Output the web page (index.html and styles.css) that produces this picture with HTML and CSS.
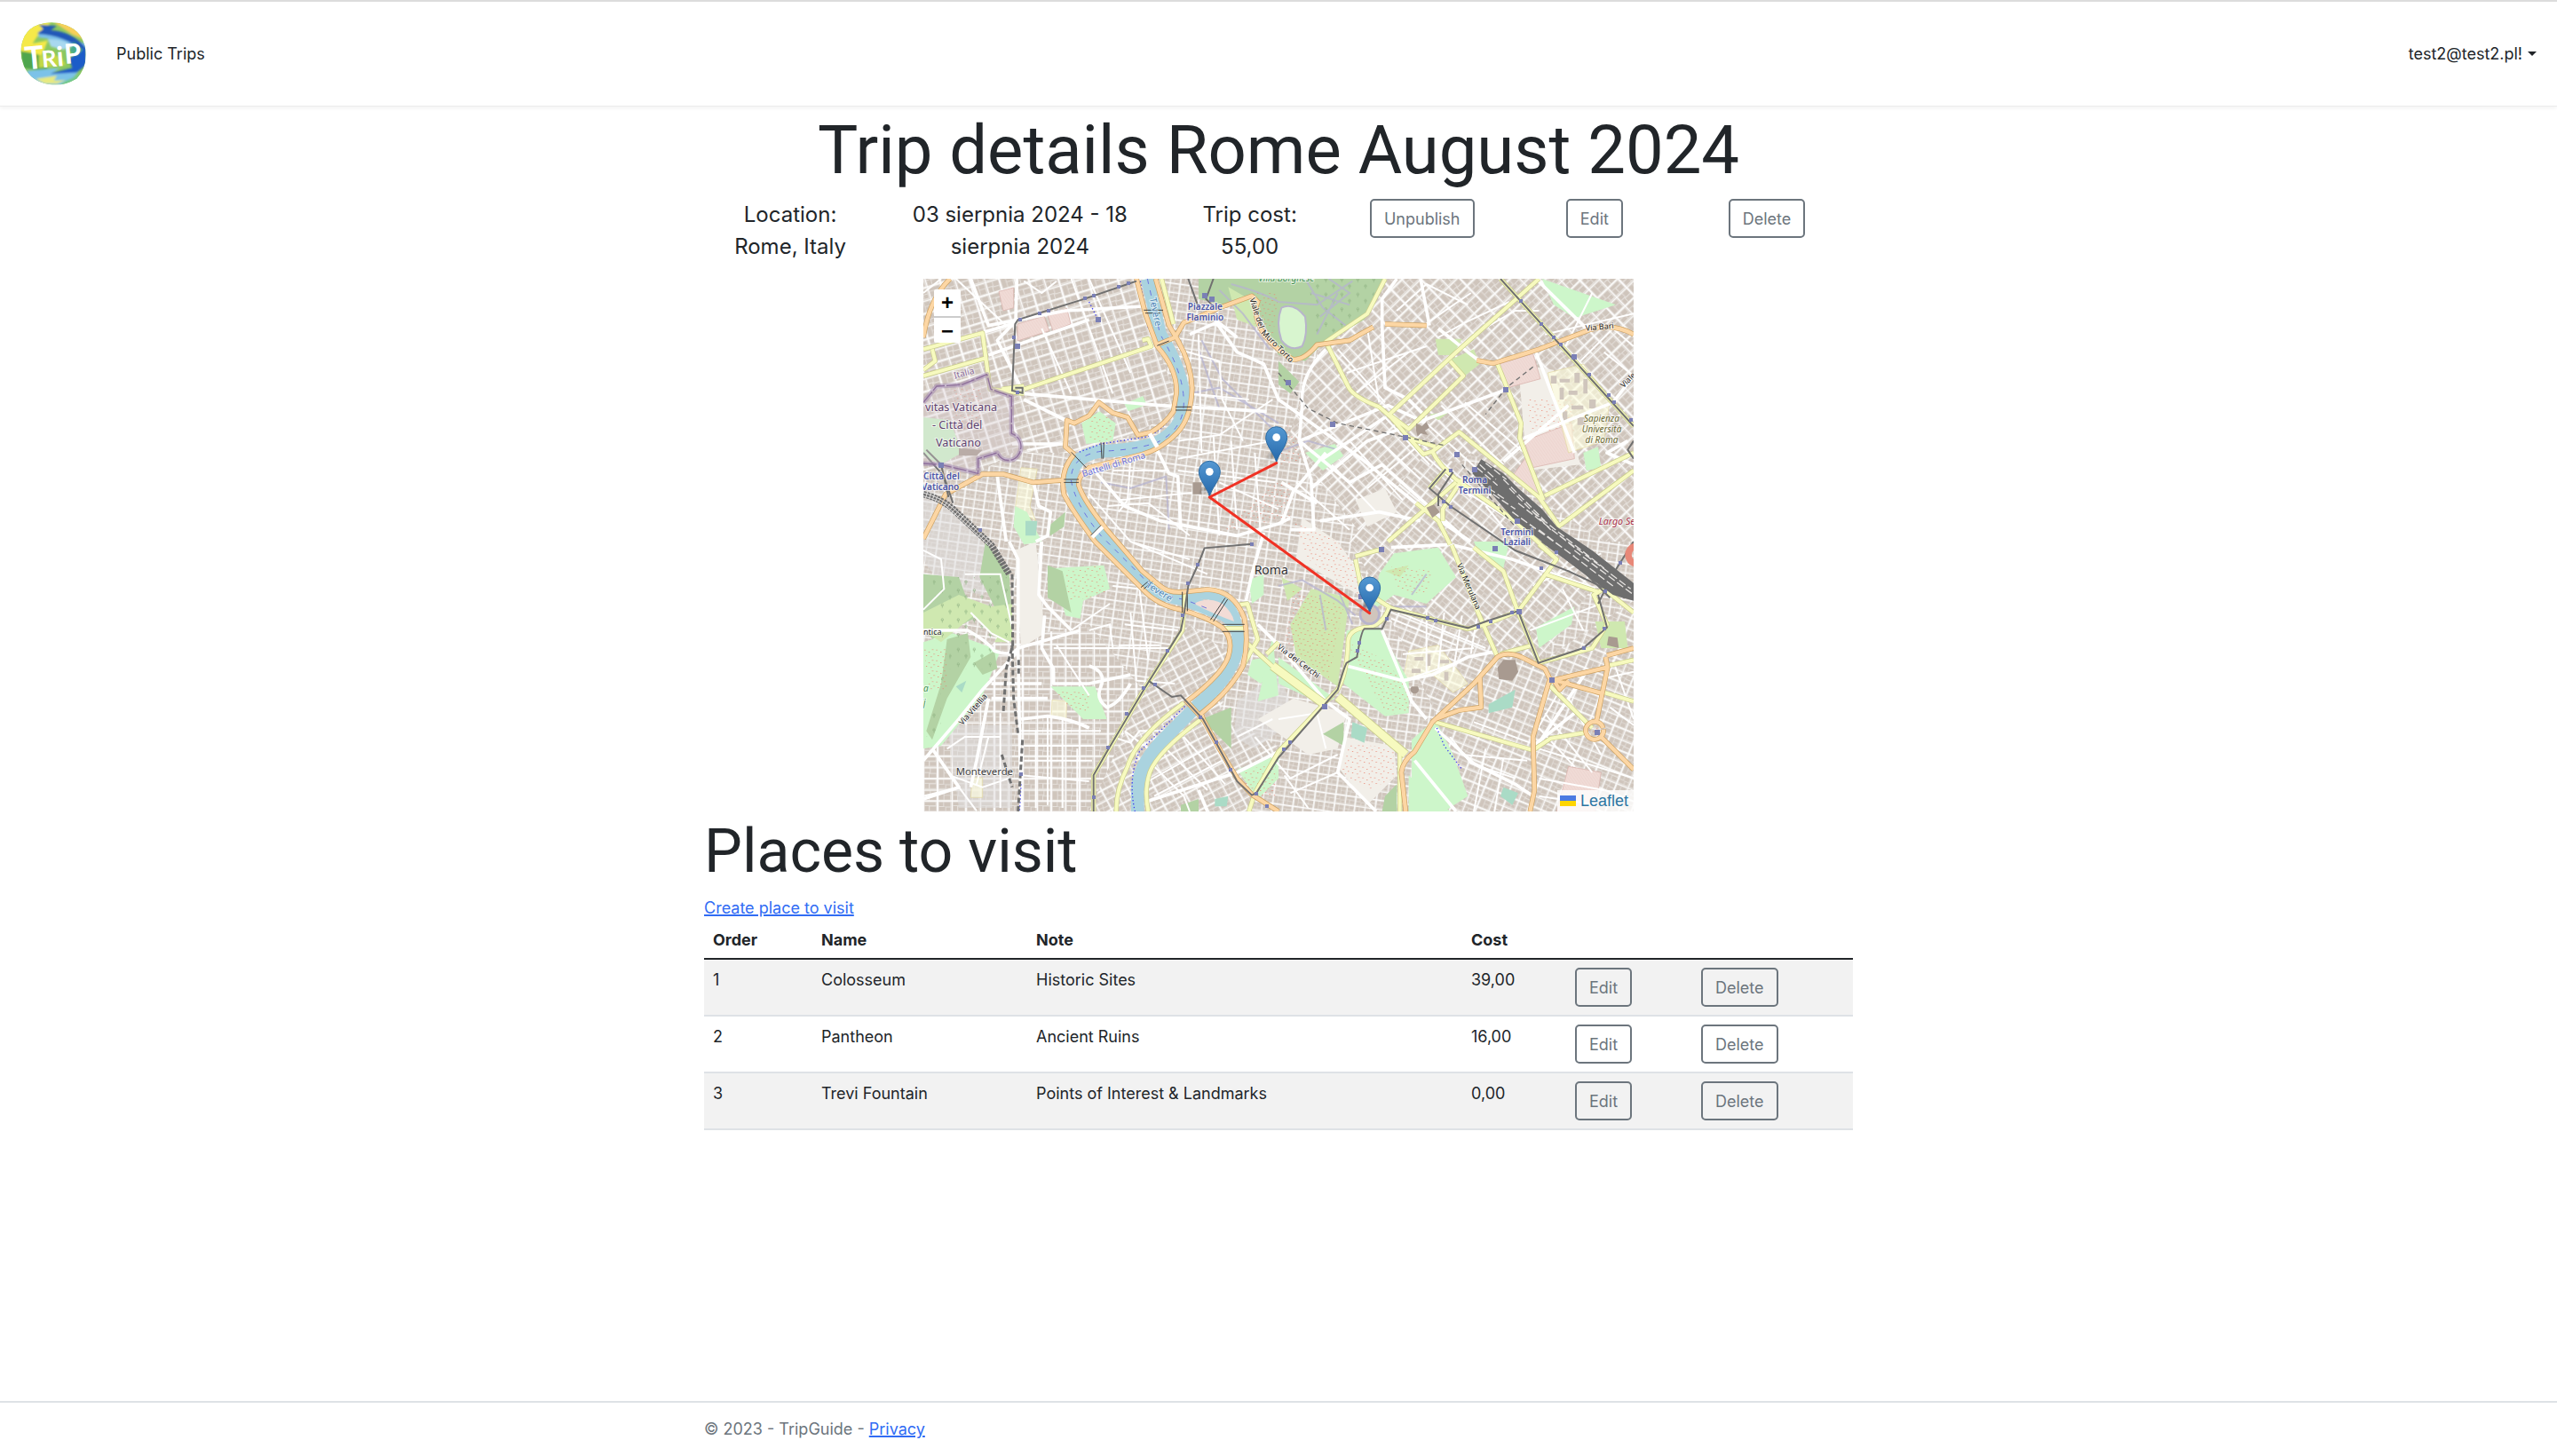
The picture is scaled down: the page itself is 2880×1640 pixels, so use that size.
FILE: index.html
```html
<!DOCTYPE html>
<html lang="en">
<head>
<meta charset="utf-8">
<meta name="viewport" content="width=device-width, initial-scale=1">
<title>Trip details - TripGuide</title>
<link rel="stylesheet" href="styles.css">
</head>
<body>
<header class="navbar">
  <a class="brand" href="#" aria-label="TripGuide home">
    <svg class="logo" viewBox="0 0 216 207" aria-hidden="true">
      <defs>
        <clipPath id="disc"><path d="M60 8 Q105 -8 150 10 Q205 30 214 90 Q220 150 185 185 Q140 212 95 204 Q35 195 12 145 Q-10 95 14 45 Q30 18 60 8Z"/></clipPath>
        <filter id="wash"><feGaussianBlur stdDeviation="3"/></filter>
      </defs>
      <g clip-path="url(#disc)">
        <rect width="216" height="207" fill="#8cc860"/>
        <g filter="url(#wash)">
          <path d="M0 0H100L60 40L40 70L90 60L70 110L0 110Z" fill="#f5e94a"/>
          <path d="M110 0H216V60L170 40Z" fill="#f7cf5a"/>
          <path d="M60 30Q130 50 216 70V120Q160 60 60 50Z" fill="#7cc0ea"/>
          <path d="M60 8L120 12L100 26Q170 30 216 85L205 95Q150 45 55 38L75 22Z" fill="#2458b8"/>
          <path d="M90 55Q150 55 170 80L140 90L100 80Z" fill="#a8d8f0"/>
          <path d="M0 95Q60 100 110 130L80 160L10 150Z" fill="#4fa64e"/>
          <path d="M60 110H130L150 140L60 150Z" fill="#c2d846"/>
          <path d="M216 80L160 120L170 150L110 165L30 172L70 190L170 178L216 140Z" fill="#1f5cc8"/>
          <path d="M20 160L130 150L100 170L190 165L150 207H40Z" fill="#7cc2e8"/>
          <path d="M50 186L120 176L110 192L150 190L120 202H80Z" fill="#e8ea80"/>
          <path d="M145 195L200 170L180 207H130Z" fill="#73c98a"/>
          <path d="M175 65L205 90L185 110L160 95Z" fill="#48aa8a"/>
        </g>
      </g>
      <g fill="#fff" class="logo-text" transform="rotate(-5 108 110)">
        <text x="14" y="148" font-size="104">T</text><text x="69" y="146" font-size="76">R</text><text x="119" y="146" font-size="90">i</text><text x="144" y="140" font-size="90">P</text>
      </g>
    </svg>
  </a>
  <nav class="nav-main" aria-label="Main"><a href="#">Public Trips</a></nav>
  <a class="account" href="#">test2@test2.pl!<span class="caret"></span></a>
</header>

<main class="container">
  <h1>Trip details Rome August 2024</h1>
  <section class="summary">
    <p>Location: Rome, Italy</p>
    <p>03 sierpnia 2024 - 18 sierpnia 2024</p>
    <p>Trip cost: 55,00</p>
    <div><button class="btn" type="button">Unpublish</button></div>
    <div><button class="btn" type="button">Edit</button></div>
    <div><button class="btn" type="button">Delete</button></div>
  </section>

  <section class="map" aria-label="Trip map">
    <svg class="tiles" viewBox="0 12 2400 1800" preserveAspectRatio="xMidYMid slice">
      <defs>
        <pattern id="blocks" width="96" height="84" patternUnits="userSpaceOnUse">
          <rect width="96" height="84" fill="#e4dfda"/>
          <path fill="#cfc5bc" d="M5 5h17v13h-17zM25 5h19v16h-19zM5 22h13v16h-13zM21 25h22v13h-22zM53 5h15v32h-15zM71 5h20v14h-20zM71 22h19v15h-19zM5 47h36v11h-36zM5 61h13v17h-13zM22 63h21v15h-21zM53 47h14v14h-14zM70 47h21v16h-21zM53 65h21v13h-21zM77 66h14v12h-14z"/>
          <path stroke="#fff" stroke-width="5" d="M0 0V84M48 0V84M0 0H96M0 42H96"/>
        </pattern>
        <pattern id="b-prati" href="#blocks" patternTransform="rotate(-17)"/>
        <pattern id="b-old" href="#blocks" patternTransform="rotate(8) scale(.72)"/>
        <pattern id="b-ne" href="#blocks" patternTransform="rotate(-44)"/>
        <pattern id="b-se" href="#blocks" patternTransform="rotate(22) scale(.85)"/>
        <pattern id="b-esq" href="#blocks" patternTransform="rotate(40) scale(.9)"/>
        <pattern id="b-test" href="#blocks" patternTransform="rotate(-28) scale(.85)"/>
        <pattern id="b-mv" href="#blocks" patternTransform="scale(1 .9)"/>
        <pattern id="dots" width="40" height="36" patternUnits="userSpaceOnUse"><path fill="#e8806c" d="M4 5h3v3h-3zM18 12h3v3h-3zM30 4h3v3h-3zM9 24h3v3h-3zM25 28h3v3h-3zM35 19h3v3h-3z"/></pattern>
        <pattern id="trees" width="54" height="50" patternUnits="userSpaceOnUse"><path fill="none" stroke="#8fb183" stroke-width="2" d="M10 24v-8M6 16a4 6 0 1 1 8 0zM36 46v-8M32 38a4 6 0 1 1 8 0z"/></pattern>
        <pattern id="hatch" width="8" height="8" patternUnits="userSpaceOnUse" patternTransform="rotate(-35)"><rect width="8" height="8" fill="#f0dbd6"/><path stroke="#dfb9b3" d="M0 0V8"/></pattern>
        <linearGradient id="pin" x2="0" y2="1"><stop stop-color="#5599d3"/><stop offset="1" stop-color="#2467aa"/></linearGradient>
        <radialGradient id="shade"><stop stop-opacity=".5"/><stop offset="1" stop-opacity="0"/></radialGradient>
        <g id="marker">
          <ellipse cx="24" cy="-28" rx="48" ry="17" fill="url(#shade)" transform="rotate(-42)"/>
          <path d="M0 0C-7 -30 -36 -55 -36 -84A36 36 0 0 1 36 -84C36 -55 7 -30 0 0Z" fill="url(#pin)" stroke="#2e6da4" stroke-width="3"/>
          <circle cy="-84" r="13" fill="#fff"/>
        </g>
        <g id="yellow">
          <path d="M0 250L200 195L225 385L340 400M0 340L210 280M340 385L770 240L760 215L740 220M805 12L845 165M265 385L340 375M0 320L40 290L30 250"/>
          <path d="M1560 12L1500 130L1360 225L1435 375Q1450 410 1540 445L1580 480L1690 605L1720 595L1810 530L2080 750L2150 850M1575 470L1800 260L2080 12M1580 475L1640 520L1825 340L1780 290M1950 12L2400 510M1940 300L2020 500L2015 550L2095 760M2100 745L2400 600M2145 850L2400 660M1640 550L1730 580M1720 595Q1740 640 1800 690L2000 830L2140 960M1800 700L1570 900M1665 770L1740 830L1780 910M1820 690L1755 790V830M1770 650L1710 720"/>
          <path d="M1460 950L1550 925M1460 960L1480 1060L1580 1125L1840 1195L1900 1180L2010 1135M1785 912L1870 1130L1940 1290M1860 920L1960 1000L2010 1140L2080 1310L2260 1260L2310 1180L2265 1080L2300 1060L2400 1140M2010 1135L2140 960L2080 910M2100 1010L2280 1070M1575 1120Q1550 1190 1490 1190Q1430 1200 1435 1250Q1430 1350 1400 1400M1610 1610V1812M1730 1510L2060 1605L2120 1565L2240 1545M2110 1380L2260 1530M2300 1410L2400 1440M1400 1400L1200 1610L1120 1750L1100 1812M1950 1280L2060 1250M2310 1320L2400 1300"/>
          <path d="M885 1070L875 1200L745 1400L575 1690V1812M880 1445Q720 1560 690 1660Q650 1740 652 1812M945 1495Q790 1610 765 1680Q745 1740 760 1812M1010 1193H1090M1060 1115L1095 1110L1130 1230L1080 1320M1090 1240L1200 1340M1160 1280L1200 1240"/>
        </g>
        <g id="orange">
          <path d="M90 12Q20 80 0 210M0 890L75 740L200 672H270L370 700L480 692M785 12L830 170L860 220Q905 300 908 380Q905 480 860 530Q810 585 740 605Q620 635 560 650Q520 680 525 710Q540 760 620 860L740 1000L800 1050Q830 1075 880 1070L960 1062Q1050 1065 1085 1160Q1100 1240 1080 1320Q1040 1400 940 1480L945 1500"/>
          <path d="M720 12L750 130L790 240Q860 320 855 400L845 460Q820 500 770 530L725 540L690 480L640 465L593 430L560 475L510 500L485 490L480 580L510 605M510 605Q460 660 475 740Q500 790 580 900L740 1060Q790 1115 870 1130Q960 1155 1010 1190Q1050 1230 1030 1290Q1010 1350 890 1440L945 1500L1000 1600L1060 1700L1110 1755L1200 1812M790 235L850 210L880 160L920 145L1000 110L1110 70L1130 90Q1110 130 1150 200Q1200 260 1250 285Q1290 285 1330 235L1440 220L1520 175M1560 165L1700 170M1870 288L1925 298L2080 250L2250 185Q2330 160 2400 200"/>
          <path d="M1630 1812L1615 1680Q1620 1640 1660 1610L1720 1510L1860 1380L1940 1290Q1970 1270 2020 1290L2100 1330L2120 1370L2310 1325M2120 1365L2300 1415M2310 1285L2400 1260M2305 1290L2312 1325L2275 1505M2290 1560L2400 1670M2115 1370L2060 1560L2065 1740L2050 1812M1880 1355L1885 1460L1810 1470L1730 1500M2130 1370L2150 1400L2180 1370M2298 1535A30 30 0 1 1 2297 1530"/>
        </g>
      </defs>

      <!-- built-up areas -->
      <rect y="12" width="2400" height="1800" fill="url(#b-old)"/>
      <path fill="url(#b-prati)" d="M0 12H730L790 240L850 400L840 470L700 540L500 600L300 600L200 660H0Z"/>
      <path fill="url(#b-ne)" d="M1340 240L1560 12H2400V900H2300L1850 600L1500 900L1230 560L1280 400Z"/>
      <path fill="url(#b-esq)" d="M1700 600L1850 650L2300 1000L2080 1310L1560 1100L1440 900Z"/>
      <path fill="url(#b-se)" d="M1550 1100L2080 1310L2400 1100V1812H1640L1740 1500Z"/>
      <path fill="url(#b-mv)" d="M0 1500L240 1240L560 1180L740 1400L570 1812H0Z"/>
      <path fill="url(#b-test)" d="M560 1812L745 1400L900 1180L1060 1300L1000 1480L1210 1600L1100 1812Z"/>
      <path fill="#e0dfdf" fill-opacity=".55" d="M0 700L200 900L290 1000L200 1080L60 1050L0 960ZM80 1520H300V1800H120ZM1060 1440L1200 1340L1260 1500L1120 1600L1050 1560Z"/>
      <path fill="#f2efe9" d="M310 930L380 900L410 1210L330 1260ZM1420 1560L1590 1590L1600 1690L1500 1790L1400 1660ZM1280 820L1400 900L1500 1040L1470 1080L1260 960ZM1460 760L1560 720L1600 800L1500 850ZM2010 300L2130 320L2220 640L2040 660ZM1130 1500L1250 1430L1430 1480L1400 1600L1300 1620Z"/>
      <path fill="url(#dots)" d="M1250 830L1400 900L1500 1040L1470 1080L1300 960ZM1440 1580L1590 1600L1590 1700L1500 1740L1410 1680ZM2040 420H2200V600H2060Z"/>

      <!-- institutions -->
      <path fill="url(#hatch)" stroke="#d7aea8" stroke-width="2" d="M318 165L408 138L425 188L318 222ZM420 135L485 112L498 165L438 188ZM255 55L305 42V110L270 120ZM1945 300L2060 265L2085 350L1975 380ZM2030 560L2190 500L2200 620L2060 650ZM1990 680L2040 610L2090 750ZM2180 1660L2290 1680L2270 1812H2140Z"/>
      <path fill="#ffffe0" stroke="#e2d8a0" stroke-width="2" d="M330 650L385 655L360 780L380 830L310 790ZM435 1435L485 1440L482 1500L432 1495ZM165 1698H200V1765H160ZM1640 1270L1740 1250L1840 1380L1790 1410L1720 1350L1620 1370ZM2110 330L2230 300L2320 420L2300 560L2180 600Z" fill-opacity=".6"/>
      <path fill="#cfc5bc" d="M2120 340h20v26h-20zM2150 350h34v12h-34zM2150 380h14v40h-14zM2180 390h30v14h-30zM2200 330h18v34h-18zM2230 350h14v50h-14zM2190 440h40v14h-40zM2160 460h16v34h-16zM2250 420h22v30h-22zM2210 480h26v26h-26zM1660 1290h30v12h-30zM1700 1280h14v40h-14zM1740 1300h36v12h-36zM1760 1340h14v30h-14zM1650 1330h30v14h-30z"/>

      <!-- parks -->
      <g fill="#cdf6ca">
        <path d="M0 480L90 490L130 600L60 640L0 610ZM310 780L350 800L400 900L340 910L305 850ZM535 500L595 460L650 500L640 560L550 570ZM680 435L742 408L755 438L692 460Z"/>
        <path d="M440 990L610 980L630 1060L540 1100L530 1160L480 1150ZM0 1240L100 1210L260 1270L200 1420L60 1590L0 1600ZM430 1390L580 1390L620 1500L540 1500L480 1440ZM1100 1030L1150 1010L1150 1080L1110 1110ZM1110 1300L1160 1290L1180 1340L1140 1380L1095 1350Z"/>
        <path d="M1590 940L1740 920L1800 1020L1700 1110L1590 1080L1520 1130L1540 1010ZM1430 1200L1540 1190L1640 1370L1640 1480L1560 1490L1420 1380ZM1650 1570L1730 1500L1790 1620L1840 1760L1760 1812L1650 1730ZM1640 1690L1780 1812H1640ZM1290 600L1390 570L1420 610L1350 660ZM2070 1190L2200 1120L2190 1180L2080 1260ZM1860 900H1980L1960 990L1880 950ZM2090 12L2340 100L2200 145L2130 100ZM1200 1290L1390 1430L1350 1450L1200 1380ZM1180 1220L1200 1420L1130 1440ZM1060 1670L1200 1620V1700L1130 1770ZM2230 600L2280 580L2290 650L2240 660Z"/>
      </g>
      <g fill="#b3d2a4">
        <path d="M930 12H1560L1490 150L1350 230L1290 290L1200 270L1140 140L1100 70L1010 100L930 80Z"/>
        <path d="M420 850L480 800L475 850L430 880ZM0 1010L120 1020L170 1160L30 1230L0 1180ZM210 900L290 1010L300 1170L240 1120L190 1020ZM420 980L470 1000L500 1140L420 1090ZM80 1230L150 1210L160 1290L80 1430L30 1570L10 1540L60 1380ZM1350 1550L1420 1510L1420 1590ZM940 1500L1040 1460L1040 1600ZM1560 1760L1600 1720V1812H1550ZM870 1790L930 1770V1812H870ZM1200 290L1270 360L1240 400L1200 370ZM170 1310L240 1270L250 1330L200 1350Z"/>
      </g>
      <g fill="#cfe8b0">
        <path d="M120 1080L230 1120L300 1110V1240L240 1220L170 1150L60 1240L0 1200V1140ZM1730 215H1820L1790 270L1740 270ZM1770 290L1860 250L1880 300L1830 340ZM1310 1060L1440 1090L1400 1390L1260 1290L1240 1180ZM1210 1020L1280 1060L1230 1100ZM2270 1170L2370 1170L2380 1260L2290 1260ZM1560 1000L1640 980L1610 1020ZM1780 460L1740 490L1710 470ZM270 1190L290 1240H240ZM1030 40L1100 80L1140 180L1060 150Z"/>
      </g>
      <path fill="#d8f5cf" stroke="#b8b4cc" stroke-width="6" d="M1210 110Q1250 90 1290 140Q1300 200 1280 240Q1240 260 1210 220Q1190 160 1210 110Z"/>
      <path fill="#aadbc6" d="M345 830L385 830L380 880L345 880ZM110 1390L145 1370L130 1410ZM1910 1450L2000 1400L1990 1460L1910 1480ZM1450 1510L1500 1530L1490 1580L1445 1560ZM985 1770L1030 1760L1025 1795H985ZM1960 1730L2010 1750L1990 1790L1950 1760Z"/>
      <path fill="url(#dots)" d="M0 1260H80V1400H20ZM480 1000L600 980L620 1080L490 1100ZM440 1400H560V1480L480 1450ZM1250 1060L1420 1120L1370 1360L1220 1240ZM1580 980L1720 1000L1700 1080L1600 1060ZM1430 1240L1560 1300L1640 1400V1480L1560 1480ZM1100 60L1200 60L1180 220L1120 180ZM1230 500L1300 620L1200 640ZM560 480H640V560H560ZM1080 1680L1190 1640V1760H1100ZM200 380H100V520H190ZM1000 870L1240 820V700H1180ZM2250 1530H2290V1560H2250Z"/>
      <path fill="url(#trees)" d="M1300 12H1550L1480 150L1330 220ZM30 1020H300V1230H60ZM100 1240H230V1330H60V1560H10Z"/>
      <path fill="none" stroke="#b5b3d0" stroke-width="6" stroke-opacity=".75" d="M1000 50L1080 130L1170 250M1040 30Q1150 60 1200 90L1330 100L1450 20M1290 12L1350 110L1440 180M1310 60L1440 100M1370 12L1440 60L1340 140M1330 200L1400 60M940 220L1010 350L1180 520M930 250L1000 450M900 400L1000 380L1200 500M1190 600L1300 560L1400 590M1200 1050L1280 1030L1400 1100L1460 1150M1340 1080L1360 1200M1400 1060L1450 1180M1590 1120L1700 1120M1650 1080L1700 1010M600 700L700 720L820 680L830 860"/>

      <!-- minor streets -->
      <g class="w-thin">
        <path d="M500 12L640 400M110 12L280 170M60 12L0 60M560 12L700 330M400 180L500 400M450 20L400 60L340 20M340 420L490 490M350 590L480 570M860 250L1000 290L1010 420L1080 560M930 200L940 600M900 400L1100 420M860 560L1000 540L1180 420M860 620L1180 560M700 620L690 760L660 800M640 660L820 660M860 660L1190 700M940 620L930 860M1040 560L1060 860M660 760L960 730M560 740L700 900L900 960M620 780L760 770L900 880M700 900L960 1010M1000 700L1200 790M1120 600L1140 880M980 540L1000 880"/>
        <path d="M1400 250L1560 430M1500 180L1540 430M1430 330L1700 240M1460 400L1640 260M1640 560L1850 750M1750 440L1960 640M1700 500L1900 680M1680 570L1500 720M1830 430L2030 600M1860 200L2000 120L2080 120M1600 120L1700 30L1840 100M1690 170L1850 60M1740 210L1830 160L1980 90M2100 200L2400 130M2260 60L2160 260M2300 260L2400 340M2210 300L2330 180L2400 240M1830 730L2180 950M1900 780L2000 900M1260 700L1440 860M1440 560L1620 760M1500 520L1680 690M1560 480L1710 640M1380 640L1530 800"/>
        <path d="M0 1130L70 1060L60 960L0 930M140 1010L260 1010L300 1190M160 1140L230 1210L290 1240M560 1200L630 1180L640 1260L440 1260M450 1250L560 1420M640 1050L730 1060L760 1300M500 1200L630 1110M680 1180L860 1200M700 1140L720 1370L850 1380M660 1250L800 1250M600 1260L830 1260M330 1540H600M340 1590H580M340 1640H570M330 1690L560 1710M380 1540V1800M420 1490V1790M470 1500V1800M520 1600V1812M220 1560L180 1720M260 1480V1800M80 1600L140 1560L260 1560M90 1690L200 1730L290 1700M0 1760L120 1730L180 1810M640 1560L700 1580L730 1540L900 1540M680 1540L760 1600M820 1600L960 1740M880 1560L1020 1720M770 1650L880 1760L900 1812M780 1760L1010 1640M760 1710L990 1580"/>
        <path d="M1200 1500L1330 1480L1360 1600M1120 1560L1240 1700L1400 1620M1060 1560L1180 1500M1220 1690L1300 1800M1240 1750L1400 1680M1560 1120L1900 1260M1580 1160L1800 1250M1620 1280L1860 1260M1620 1370L1800 1310M1700 1130V1340M1760 1140L1740 1330M1820 1150L1790 1340M1870 1160L1850 1280M1780 1560L1850 1650L2000 1700M1820 1620L2040 1640M1860 1510L2050 1580M1900 1600L1860 1812M1960 1630L1930 1812M2070 1520L2200 1660M2100 1480L2260 1680M2140 1420L2060 1560M2180 1430L2290 1620M2080 1600L2400 1700M2080 1700L2300 1740M2080 1760L2280 1790M2330 1300L2400 1500M2320 1460L2400 1520M2310 1360L2400 1340M2060 1050L2290 940M2050 1200L2290 1110M2160 1060L2230 1200"/>
      </g>
      <g class="w-main">
        <path d="M316 12L312 155L250 220L340 400M160 12L220 170L480 120L740 105M0 250L300 165M220 270L560 150M340 400L800 440L1160 460M340 420L480 490M490 570L300 570M250 680L280 900M370 690L390 780L430 800L420 880L380 900M560 640L680 780L800 830L1060 880L1200 840L1240 820M780 570L830 670L860 680L870 860M900 200L990 160L1060 260L1150 300L1200 420L1480 620L1700 800L1850 900M985 150L1060 210"/>
        <path d="M1360 250Q1270 340 1280 440L1270 560L1570 440L1700 500M1270 560L1440 700L1550 640L1830 890M1270 560L1310 690L1320 860L1240 860M1350 620L1560 480M1310 720L1500 560L1960 390M1360 600L1250 730L1210 840M1550 170L1560 380L1640 420L1700 480M1600 12L1550 80V170M1680 12L1710 170M1740 180L1840 260L1880 290M2070 12L2250 190M2030 550L2330 430L2400 340M1340 830L1540 800L1680 830M1960 630L2180 440M2070 260L2200 600M1580 920L1780 910L1990 960L2270 1060"/>
        <path d="M290 900L320 960V1270L330 1812M0 1200H150Q220 1240 240 1270Q300 1290 320 1260L530 1200M400 900L390 1080L420 1120L500 1200M320 1270L200 1400L120 1500L0 1640M410 1150L400 1260L440 1330V1380H560L700 1350M230 1380H400M230 1430H420M220 1430L180 1640L160 1730M560 1320Q620 1340 600 1390Q580 1430 620 1460Q660 1450 700 1380M30 1600L120 1730L0 1770M330 1500L420 1490Q500 1500 560 1530M1150 870L1110 1010L1090 1100M1130 1180L1200 1250L1360 1440L1440 1500L1400 1680L1530 1812M750 1780L1060 1680L1200 1610M930 1740L960 1812"/>
        <path d="M1550 1200L1650 1440L1700 1500M1430 1320L1620 1370L1720 1350L1840 1290L1940 1270M1730 1530L1860 1650L2000 1720L2060 1760M1660 1640L1800 1812M2060 1590L2200 1480M2240 1340L2080 1580M2400 640L2310 600L2380 560M1210 700L1330 770"/>
      </g>

      <!-- Tiber -->
      <g fill="none" stroke="#aad3df">
        <path stroke-width="44" d="M757 12L800 200Q880 330 880 430Q880 520 790 565Q720 590 600 595Q500 610 499 690Q510 770 600 880L740 1020Q790 1085 880 1095L970 1130Q1060 1150 1065 1230Q1060 1340 930 1450L800 1580Q725 1660 724 1740V1812"/>
        <path stroke-width="28" d="M885 1085Q970 1070 1020 1100Q1060 1140 1065 1200"/>
      </g>
      <path fill="#f2dcd6" d="M915 1110Q960 1085 1010 1110Q1045 1140 1050 1170Q980 1145 915 1110Z"/>
      <path fill="none" stroke="#6d74e0" stroke-width="3" stroke-dasharray="18 22" d="M757 12L800 200Q880 330 880 430Q880 520 790 565Q720 590 600 595Q500 610 499 690Q510 770 600 880L740 1020Q790 1085 880 1095L970 1130"/>
      <path fill="none" stroke="#4040f0" stroke-width="4" stroke-dasharray="4 8" d="M733 20L760 180L850 330L855 440Q830 510 760 545L600 570L520 600M960 1380L730 1610Q690 1700 715 1812M1735 1530L1760 1590L1820 1670M560 90L590 150M330 1720L325 1812"/>

      <!-- classified roads: casing below, fill above -->
      <use href="#yellow" class="y-case"/>
      <path class="y-wide-case" d="M1180 1320L1355 1450M1400 1425L1630 1620"/>
      <use href="#yellow" class="y-fill"/>
      <path class="y-wide" d="M1180 1320L1355 1450M1400 1425L1630 1620"/>
      <use href="#orange" class="o-case"/>
      <use href="#orange" class="o-fill"/>

      <!-- bridges -->
      <path fill="none" stroke="#fff" stroke-width="14" d="M570 885L605 850M765 535L790 580"/>
      <path fill="none" stroke="#444" stroke-width="3" d="M600 565L603 620M610 565L608 620M500 598L550 650M475 690H525M475 700H525M565 880L600 845M735 1055L765 1030M745 1060L775 1035M852 445H905M852 456H905M790 238L830 222M875 1070V1140M892 1070V1135M970 1165L1020 1090M980 1170L1028 1095M1010 1180H1085M1010 1204H1085M745 118H810M750 128H800"/>

      <!-- railways and trams -->
      <g fill="none" stroke="#707070">
        <path stroke-width="6" d="M720 20L545 80L320 150L310 165L300 390L335 398V380H310M895 12L930 110M980 12L955 80L975 100M1110 908L950 922L928 978L895 1050L880 1150L870 1200L745 1400L620 1610L575 1690V1812M760 1370L840 1425L870 1420L945 1500L1000 1600L1060 1710L1110 1757L1125 1750L1200 1630L1400 1400Q1420 1330 1430 1310L1465 1290Q1480 1200 1490 1195L1550 1195L1580 1130L1700 1158L1840 1192L1900 1170L2010 1135L2078 1310L2230 1260L2310 1190L2280 1080M1950 12L2400 510M2400 560L2380 590L2400 620M1765 655L1710 720L1780 780L2000 930L2180 1000L2370 1090M1790 665L1740 740V780M2090 900L2230 1000L2320 1090M2400 900L2330 1010L2280 1110"/>
        <path stroke-width="22" stroke-dasharray="9 3" d="M0 740Q60 755 100 790L230 912L290 1010"/>
        <path stroke-width="3" stroke="#ddd" d="M0 735Q60 750 105 790L235 912M0 746Q60 760 95 795L220 912"/>
        <path stroke-width="6" d="M10 590L60 640L85 750M0 600L70 680L100 770"/>
        <path stroke-width="9" stroke-dasharray="18 10" d="M300 1010L302 1250L280 1330L270 1480M300 1250L305 1430L320 1550M322 1300V1350M335 1570L320 1812M265 1620L300 1730"/>
        <path stroke-width="4" stroke-dasharray="16 12" d="M1200 330L1300 450L1400 500L1620 545L1760 575M2060 310L1970 380L1900 470M1820 640L2000 850"/>
      </g>
      <path fill="#6e6e6e" d="M1885 622L1960 670L2010 720L2090 790L2140 850L2260 930L2400 1040V1100L2330 1080L2220 1000L2090 900L1990 820L1930 750L1855 670Z"/>
      <path fill="none" stroke="#e6e3e0" stroke-width="4" stroke-dasharray="26 10" d="M1880 640L1935 690M1870 650L1940 710M1900 635L1970 690M1910 720L1970 760M1925 740L2000 790M1960 690L2100 830M1980 720L2120 860M1990 800L2200 950M2010 770L2200 920M2060 800L2300 990M2080 860L2330 1050M2150 880L2390 1060M2200 930L2400 1080"/>
      <path fill="#a89a90" d="M1940 1325L1960 1300H2000L2010 1340L1990 1370L1945 1365ZM1665 500L1685 510L1700 495L1710 515L1695 525L1705 540L1680 535L1670 545L1665 525ZM1700 785L1725 775L1745 800L1720 820ZM2315 1220L2345 1225L2350 1260L2310 1250ZM1650 1390a14 14 0 1 0 20 0ZM120 585L200 590L180 610H120ZM910 700H940V740H910Z"/>
      <path fill="#e88878" d="M2400 905A42 42 0 0 0 2400 985V960A20 20 0 0 1 2400 930Z"/>
      <circle cx="1508" cy="1146" r="32" fill="#d0c5bc" stroke="#b8b4cc" stroke-width="8"/>

      <!-- Vatican border -->
      <g fill="none" stroke-linejoin="round">
        <path fill="#d9cfd4" fill-opacity=".35" stroke="#a085ad" stroke-opacity=".5" stroke-width="16" d="M0 430L45 375L130 370L215 335L228 385L298 410V535A42 46 0 1 1 250 600L185 620V670L60 640L0 636"/>
        <path stroke="#8e6f9c" stroke-width="4" stroke-dasharray="46 6" d="M0 430L45 375L130 370L215 335L228 385L298 410V535A42 46 0 1 1 250 600L185 620V670L60 640L0 636"/>
      </g>

      <!-- stops -->
      <path fill="#7a7fb5" d="M309 231h18v18h-18zM321 144h12v12h-12zM300 204h12v12h-12zM387 123h12v12h-12zM417 114h12v12h-12zM540 72h12v12h-12zM570 63h12v12h-12zM654 33h12v12h-12zM687 21h12v12h-12zM582 141h18v18h-18zM942 60h18v18h-18zM966 72h18v18h-18zM51 633h18v18h-18zM312 390h12v12h-12zM186 855h12v12h-12z
        M1224 354h18v18h-18zM1374 495h18v18h-18zM1620 540h18v18h-18zM1794 597h18v18h-18zM1854 648h18v18h-18zM1959 378h18v18h-18zM2190 267h18v18h-18zM2013 81h12v12h-12zM2082 159h12v12h-12zM2124 204h12v12h-12zM2148 228h12v12h-12zM2244 330h12v12h-12zM2310 399h12v12h-12zM2328 423h12v12h-12zM2385 483h12v12h-12zM1776 654h12v12h-12zM1752 759h12v12h-12zM1776 777h12v12h-12zM1998 822h18v18h-18z
        M1539 918h18v18h-18zM1923 915h18v18h-18zM1470 1077h18v18h-18zM1560 1155h12v12h-12zM1698 1152h12v12h-12zM1725 1161h12v12h-12zM1869 1182h12v12h-12zM1911 1164h12v12h-12zM1983 1134h12v12h-12zM2004 1128h18v18h-18zM2295 1188h12v12h-12zM2226 1254h12v12h-12zM2115 1359h18v18h-18zM2268 1536h18v18h-18zM1347 1449h18v18h-18zM1233 1572h12v12h-12zM1212 1596h12v12h-12zM1467 1236h12v12h-12zM1461 1263h12v12h-12zM2082 984h12v12h-12zM2133 930h12v12h-12zM2349 966h12v12h-12zM2298 1062h12v12h-12z
        M1104 903h12v12h-12zM921 972h12v12h-12zM888 1035h12v12h-12zM870 1143h12v12h-12zM819 1263h12v12h-12zM777 1377h12v12h-12zM738 1389h12v12h-12zM681 1476h12v12h-12zM618 1590h12v12h-12zM570 1758h12v12h-12zM930 1488h12v12h-12zM984 1572h12v12h-12zM1032 1665h12v12h-12zM1119 1746h12v12h-12zM1155 1788h12v12h-12zM324 1680h12v12h-12z"/>

      <!-- labels -->
      <g class="label">
        <g font-size="38" fill="#5f4370"><text x="6" y="458">vitas Vaticana</text><text x="30" y="518">- Città del</text><text x="42" y="578">Vaticano</text></g>
        <text x="106" y="350" font-size="30" fill="#8a6a99" transform="rotate(-15 106 350)">Italia</text>
        <g font-size="30" font-weight="600" fill="#4b55a8"><text x="0" y="691">Città del</text><text x="-6" y="727">Vaticano</text>
          <g text-anchor="middle"><text x="952" y="117">Piazzale</text><text x="952" y="153">Flaminio</text><text x="1863" y="703">Roma</text><text x="1863" y="739">Termini</text><text x="2006" y="878">Termini</text><text x="2006" y="912">Laziali</text></g></g>
        <g font-size="30" font-style="italic" fill="#6b6a33" text-anchor="middle"><text x="2292" y="495">Sapienza</text><text x="2292" y="531">Università</text><text x="2292" y="567">di Roma</text></g>
        <text x="2282" y="844" font-size="32" font-style="italic" fill="#a8324a">Largo Se</text>
        <g font-size="30" font-style="italic" fill="#3f9150"><text x="1132" y="20">Villa Borghese</text><text x="-8" y="1408">ia</text><text x="-8" y="1454">lj</text></g>
        <text x="1118" y="1010" font-size="42" fill="#333">Roma</text>
        <text x="110" y="1688" font-size="34" fill="#444">Monteverde</text>
        <g font-size="27" fill="#222">
          <text x="0" y="1215">ntica</text>
          <text x="132" y="1522" transform="rotate(-49 132 1522)">Via Vitellia</text>
          <text x="1194" y="1260" transform="rotate(37 1194 1260)">Via dei Cerchi</text>
          <text x="1802" y="978" transform="rotate(67 1802 978)">Via Merulana</text>
          <text x="2238" y="188" transform="rotate(-5 2238 188)">Via Bari</text>
          <text x="2366" y="382" transform="rotate(-45 2366 382)">Viale</text>
          <text x="1102" y="80" transform="rotate(72 1102 80)">Viale del</text>
          <text x="1140" y="196" transform="rotate(45 1140 196)">Muro Torto</text>
        </g>
        <g font-size="32" fill="#4f87b5"><text x="764" y="78" transform="rotate(78 764 78)">Tevere</text><text x="750" y="1052" transform="rotate(32 750 1052)">Tevere</text></g>
        <text x="540" y="682" font-size="30" fill="#6a6fd8" transform="rotate(-17 540 682)">Battelli di Roma</text>
      </g>

      <!-- trip route -->
      <use href="#marker" x="1193" y="632"/><use href="#marker" x="967" y="748"/><use href="#marker" x="1508" y="1140"/>
      <path fill="none" stroke="#f03224" stroke-width="9" stroke-linecap="round" stroke-linejoin="round" d="M1193 635L967 750L1508 1142"/>
    </svg>
    <div class="zoom"><button type="button" aria-label="Zoom in">+</button><button type="button" aria-label="Zoom out">−</button></div>
    <a class="attribution" href="#"><span class="flag"></span>Leaflet</a>
  </section>

  <h2>Places to visit</h2>
  <a class="link" href="#">Create place to visit</a>
  <table>
    <colgroup><col class="c-order"><col class="c-name"><col><col class="c-cost"><col class="c-edit"><col class="c-delete"></colgroup>
    <thead><tr><th scope="col">Order</th><th scope="col">Name</th><th scope="col">Note</th><th scope="col">Cost</th><td></td><td></td></tr></thead>
    <tbody>
      <tr><td>1</td><td>Colosseum</td><td>Historic Sites</td><td>39,00</td><td><button class="btn" type="button">Edit</button></td><td><button class="btn" type="button">Delete</button></td></tr>
      <tr><td>2</td><td>Pantheon</td><td>Ancient Ruins</td><td>16,00</td><td><button class="btn" type="button">Edit</button></td><td><button class="btn" type="button">Delete</button></td></tr>
      <tr><td>3</td><td>Trevi Fountain</td><td>Points of Interest &amp; Landmarks</td><td>0,00</td><td><button class="btn" type="button">Edit</button></td><td><button class="btn" type="button">Delete</button></td></tr>
    </tbody>
  </table>
</main>

<footer><div class="container">© 2023 - TripGuide - <a class="link" href="#">Privacy</a></div></footer>
</body>
</html>
```
FILE: styles.css
```css
* { box-sizing: border-box; }

body {
  margin: 0;
  min-height: 100vh;
  display: flex;
  flex-direction: column;
  background: #fff;
  color: #212529;
  font-family: Inter, "Noto Sans", sans-serif;
  font-size: 18px;
  line-height: 27px;
}

h1, h2, p { margin: 0; }

.navbar {
  display: flex;
  align-items: center;
  height: 120px;
  padding: 0 23px;
  border-top: 2px solid #dcdcdc;
  border-bottom: 1px solid #ececec;
  box-shadow: 0 2px 4px rgba(0, 0, 0, .05);
}
.navbar a { color: #212529; text-decoration: none; }
.brand { display: flex; margin-right: 34px; }
.logo { width: 74px; height: 71px; }
.logo-text { font-family: Lato, sans-serif; font-weight: 700; }
.account { display: flex; align-items: center; gap: 6px; margin-left: auto; }
.caret {
  border: 5px solid transparent;
  border-top-color: #212529;
  border-bottom: 0;
}

.container {
  width: 100%;
  max-width: 1294px;
  margin: 0 auto;
}
main { flex: 1; }

h1, h2 { font-family: Roboto, Inter, sans-serif; font-weight: 400; }
h1 {
  font-size: 76px;
  line-height: 98px;
  text-align: center;
  margin-bottom: 6px;
}
h2 {
  font-size: 68px;
  line-height: 90px;
  margin-bottom: 5px;
}

.summary {
  display: grid;
  grid-template-columns: 3fr 5fr 3fr 3fr 3fr 3fr;
  margin-bottom: 18px;
  text-align: center;
}
.summary p {
  padding: 0 32px;
  font-size: 24px;
  line-height: 36px;
}

.btn {
  display: block;
  height: 44px;
  padding: 0 14px;
  border: 2px solid #6c757d;
  border-radius: 5px;
  background: transparent;
  color: #6c757d;
  font: inherit;
}
.summary .btn { margin: 0 auto; }

.map {
  position: relative;
  width: 100%;
  max-width: 800px;
  aspect-ratio: 4 / 3;
  margin: 0 auto;
  overflow: hidden;
}
.tiles { display: block; width: 100%; height: 100%; }
.label text {
  font-family: "Noto Sans", sans-serif;
  paint-order: stroke;
  stroke: #fff;
  stroke-opacity: .6;
  stroke-width: 6px;
}
.w-thin { fill: none; stroke: #fff; stroke-width: 6px; }
.w-main { fill: none; stroke: #fff; stroke-width: 11px; stroke-linejoin: round; }
.y-case, .y-fill, .o-case, .o-fill { fill: none; stroke-linejoin: round; }
.y-case { stroke: #c9cd8a; stroke-width: 16px; }
.y-fill { stroke: #f7fabf; stroke-width: 12px; }
.o-case { stroke: #cda05f; stroke-width: 17px; }
.o-fill { stroke: #fcd6a4; stroke-width: 13px; }
.y-wide-case { fill: none; stroke: #c9cd8a; stroke-width: 31px; }
.y-wide { fill: none; stroke: #f7fabf; stroke-width: 26px; }

.zoom {
  position: absolute;
  top: 12px;
  left: 12px;
  width: 30px;
  border-radius: 2px;
  overflow: hidden;
}
.zoom button {
  display: block;
  width: 30px;
  height: 30px;
  padding: 0;
  border: 0;
  background: #fff;
  color: #000;
  font: bold 24px/30px "Liberation Sans", sans-serif;
}
.zoom button + button { border-top: 2px solid #ccc; }
.attribution {
  position: absolute;
  right: 0;
  bottom: 0;
  display: flex;
  align-items: center;
  gap: 5px;
  padding: 0 6px 0 3px;
  background: rgba(255, 255, 255, .8);
  color: #2c76a3;
  font: 18px/24px "Liberation Sans", sans-serif;
  text-decoration: none;
}
.flag { width: 18px; height: 12px; background: linear-gradient(#4c7be1 50%, #ffd500 50%); }

.link { color: #316cf4; text-decoration: underline; text-decoration-thickness: 2px; }
main > .link { display: table; }

table { width: 100%; table-layout: fixed; border-collapse: separate; border-spacing: 0; }
th, td { padding: 9px 10px; text-align: left; vertical-align: top; border-bottom: 2px solid #dee2e6; }
th, thead td { padding-bottom: 7px; border-bottom-color: #212529; }
th { font-weight: 700; }
tbody tr:nth-child(odd) td { background: #f2f2f2; }
.c-order { width: 122px; }
.c-name { width: 242px; }
.c-cost { width: 117px; }
.c-edit { width: 142px; }
.c-delete { width: 181px; }

footer {
  border-top: 2px solid #dee2e6;
  color: #6c757d;
  line-height: 60px;
}
```
